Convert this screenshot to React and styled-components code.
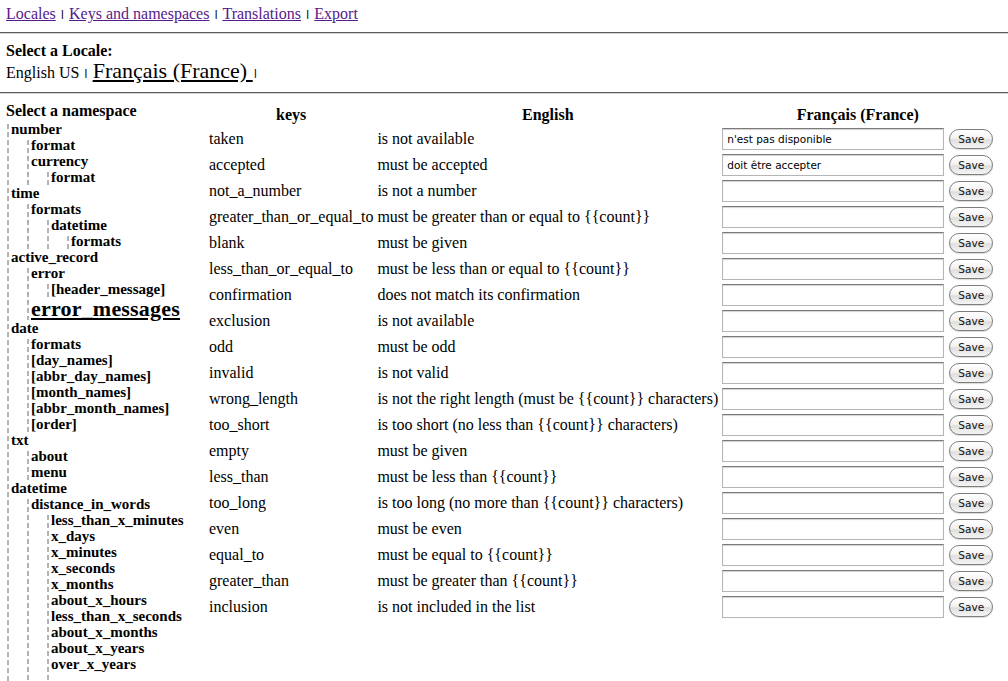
import React from "react";
import styled, { createGlobalStyle } from "styled-components";

const GlobalStyle = createGlobalStyle`
  body {
    margin: 0;
    background: #fff;
    color: #000;
    font-family: "Liberation Serif", "Times New Roman", serif;
    font-size: 16px;
  }
`;

const Page = styled.div`
  width: 1008px;
  overflow: hidden;
`;

const Nav = styled.div`
  padding: 5px 6px 0;
  height: 18px;
  line-height: 18px;
`;

const NavLink = styled.a`
  color: #551a8b;
  text-decoration: underline;
  cursor: pointer;
`;

const Sep = styled.span`
  font-family: "DejaVu Sans", sans-serif;
  font-weight: bold;
  font-size: 9px;
  line-height: 1;
  vertical-align: 2px;
  margin: 0 1px;
`;

const Rule = styled.hr`
  margin: 9px 0 0;
  height: 0;
  border: none;
  border-top: 1px solid #5a5a5a;
  border-bottom: 1px solid #d8d8d8;
`;

const LocaleBlock = styled.div`
  padding: 8px 6px 0;
`;

const Heading = styled.div`
  font-weight: bold;
  height: 18px;
  line-height: 18px;
`;

const LocaleLine = styled.div`
  height: 23px;
  line-height: 22px;
`;

const CurrentLocale = styled.a`
  font-size: 22px;
  color: #000;
  text-decoration: underline;
`;

const Main = styled.div`
  display: flex;
  align-items: flex-start;
  padding: 0 6px;
`;

const Sidebar = styled.div`
  width: 200px;
  flex-shrink: 0;
  padding-top: 8px;
`;

const TreeList = styled.ul`
  list-style: none;
  margin: ${(p) => (p.$root ? "1px 0 0 1px" : "0 0 0 16px")};
  padding: 0 0 ${(p) => (p.$tail ? "14px" : "0")} 4px;
  background: repeating-linear-gradient(
      to bottom,
      #b3b3b3 0,
      #b3b3b3 5px,
      transparent 5px,
      transparent 8px
    )
    left 3px / 2px 100% no-repeat;
`;

const TreeItem = styled.li`
  font-weight: bold;
  font-size: 15px;
  line-height: 16px;
  white-space: nowrap;
`;

const NodeLink = styled.a`
  color: #000;
  text-decoration: none;
  ${(p) =>
    p.$selected &&
    `
    font-size: 22px;
    line-height: 23px;
    letter-spacing: 0.2px;
    text-decoration: underline;
    display: inline-block;
  `}
`;

const Table = styled.table`
  margin-top: 9px;
  border-spacing: 2px;
  font-size: 16px;
`;

const Th = styled.th`
  padding: 1px;
  line-height: 18px;
  text-align: center;
  font-weight: bold;
`;

const Td = styled.td`
  padding: 1px;
  white-space: nowrap;
  vertical-align: middle;
  line-height: 18px;
`;

const EditCell = styled.div`
  display: flex;
  align-items: center;
  gap: 5px;
`;

const TextInput = styled.input`
  box-sizing: border-box;
  width: 222px;
  height: 22px;
  margin: 0;
  padding: 0 4px;
  border: 1px solid #b5b5b5;
  border-top-color: #7a7a7a;
  box-shadow: inset 0 1px 1px rgba(0, 0, 0, 0.18);
  font-family: "DejaVu Sans", sans-serif;
  font-size: 10.5px;
  color: #000;
  background: #fff;
`;

const SaveButton = styled.button`
  box-sizing: border-box;
  width: 44px;
  height: 20px;
  margin: 0;
  padding: 0;
  border: 1px solid #7d7d7d;
  border-radius: 10px;
  background: linear-gradient(#ffffff 0%, #f3f3f3 45%, #dedede 55%, #f5f5f5 100%);
  box-shadow: 0 1px 1px rgba(0, 0, 0, 0.15);
  font-family: "DejaVu Sans", sans-serif;
  font-size: 10.5px;
  color: #111;
  line-height: 18px;
`;

const tree = [
  { label: "number", children: [{ label: "format" }, { label: "currency", children: [{ label: "format" }] }] },
  {
    label: "time",
    children: [{ label: "formats", children: [{ label: "datetime", children: [{ label: "formats" }] }] }],
  },
  {
    label: "active_record",
    children: [
      { label: "error", children: [{ label: "[header_message]" }] },
      { label: "error_messages", selected: true },
    ],
  },
  {
    label: "date",
    children: [
      { label: "formats" },
      { label: "[day_names]" },
      { label: "[abbr_day_names]" },
      { label: "[month_names]" },
      { label: "[abbr_month_names]" },
      { label: "[order]" },
    ],
  },
  { label: "txt", children: [{ label: "about" }, { label: "menu" }] },
  {
    label: "datetime",
    children: [
      {
        label: "distance_in_words",
        tail: true,
        children: [
          { label: "less_than_x_minutes" },
          { label: "x_days" },
          { label: "x_minutes" },
          { label: "x_seconds" },
          { label: "x_months" },
          { label: "about_x_hours" },
          { label: "less_than_x_seconds" },
          { label: "about_x_months" },
          { label: "about_x_years" },
          { label: "over_x_years" },
        ],
      },
    ],
  },
];

const rows = [
  ["taken", "is not available", "n'est pas disponible"],
  ["accepted", "must be accepted", "doit être accepter"],
  ["not_a_number", "is not a number", ""],
  ["greater_than_or_equal_to", "must be greater than or equal to {{count}}", ""],
  ["blank", "must be given", ""],
  ["less_than_or_equal_to", "must be less than or equal to {{count}}", ""],
  ["confirmation", "does not match its confirmation", ""],
  ["exclusion", "is not available", ""],
  ["odd", "must be odd", ""],
  ["invalid", "is not valid", ""],
  ["wrong_length", "is not the right length (must be {{count}} characters)", ""],
  ["too_short", "is too short (no less than {{count}} characters)", ""],
  ["empty", "must be given", ""],
  ["less_than", "must be less than {{count}}", ""],
  ["too_long", "is too long (no more than {{count}} characters)", ""],
  ["even", "must be even", ""],
  ["equal_to", "must be equal to {{count}}", ""],
  ["greater_than", "must be greater than {{count}}", ""],
  ["inclusion", "is not included in the list", ""],
];

const Tree = ({ nodes, root, tail }) => (
  <TreeList $root={root} $tail={tail}>
    {nodes.map((node, i) => (
      <TreeItem key={node.label + i}>
        <NodeLink $selected={node.selected}>{node.label}</NodeLink>
        {node.children && <Tree nodes={node.children} tail={node.tail} />}
      </TreeItem>
    ))}
  </TreeList>
);

const App = () => {
  return (
    <Page>
      <GlobalStyle />
      <Nav>
        <NavLink>Locales</NavLink> <Sep>|</Sep> <NavLink>Keys and namespaces</NavLink> <Sep>|</Sep>{" "}
        <NavLink>Translations</NavLink> <Sep>|</Sep> <NavLink>Export</NavLink>
      </Nav>
      <Rule />
      <LocaleBlock>
        <Heading>Select a Locale:</Heading>
        <LocaleLine>
          English US <Sep>|</Sep> <CurrentLocale>Français (France) </CurrentLocale>
          <Sep>|</Sep>
        </LocaleLine>
      </LocaleBlock>
      <Rule />
      <Main>
        <Sidebar>
          <Heading>Select a namespace</Heading>
          <Tree nodes={tree} root />
        </Sidebar>
        <Table>
          <thead>
            <tr>
              <Th>keys</Th>
              <Th>English</Th>
              <Th>Français (France)</Th>
            </tr>
          </thead>
          <tbody>
            {rows.map(([key, english, french]) => (
              <tr key={key}>
                <Td>{key}</Td>
                <Td>{english}</Td>
                <Td>
                  <EditCell>
                    <TextInput type="text" defaultValue={french} />
                    <SaveButton type="button">Save</SaveButton>
                  </EditCell>
                </Td>
              </tr>
            ))}
          </tbody>
        </Table>
      </Main>
    </Page>
  );
};

export default App;
